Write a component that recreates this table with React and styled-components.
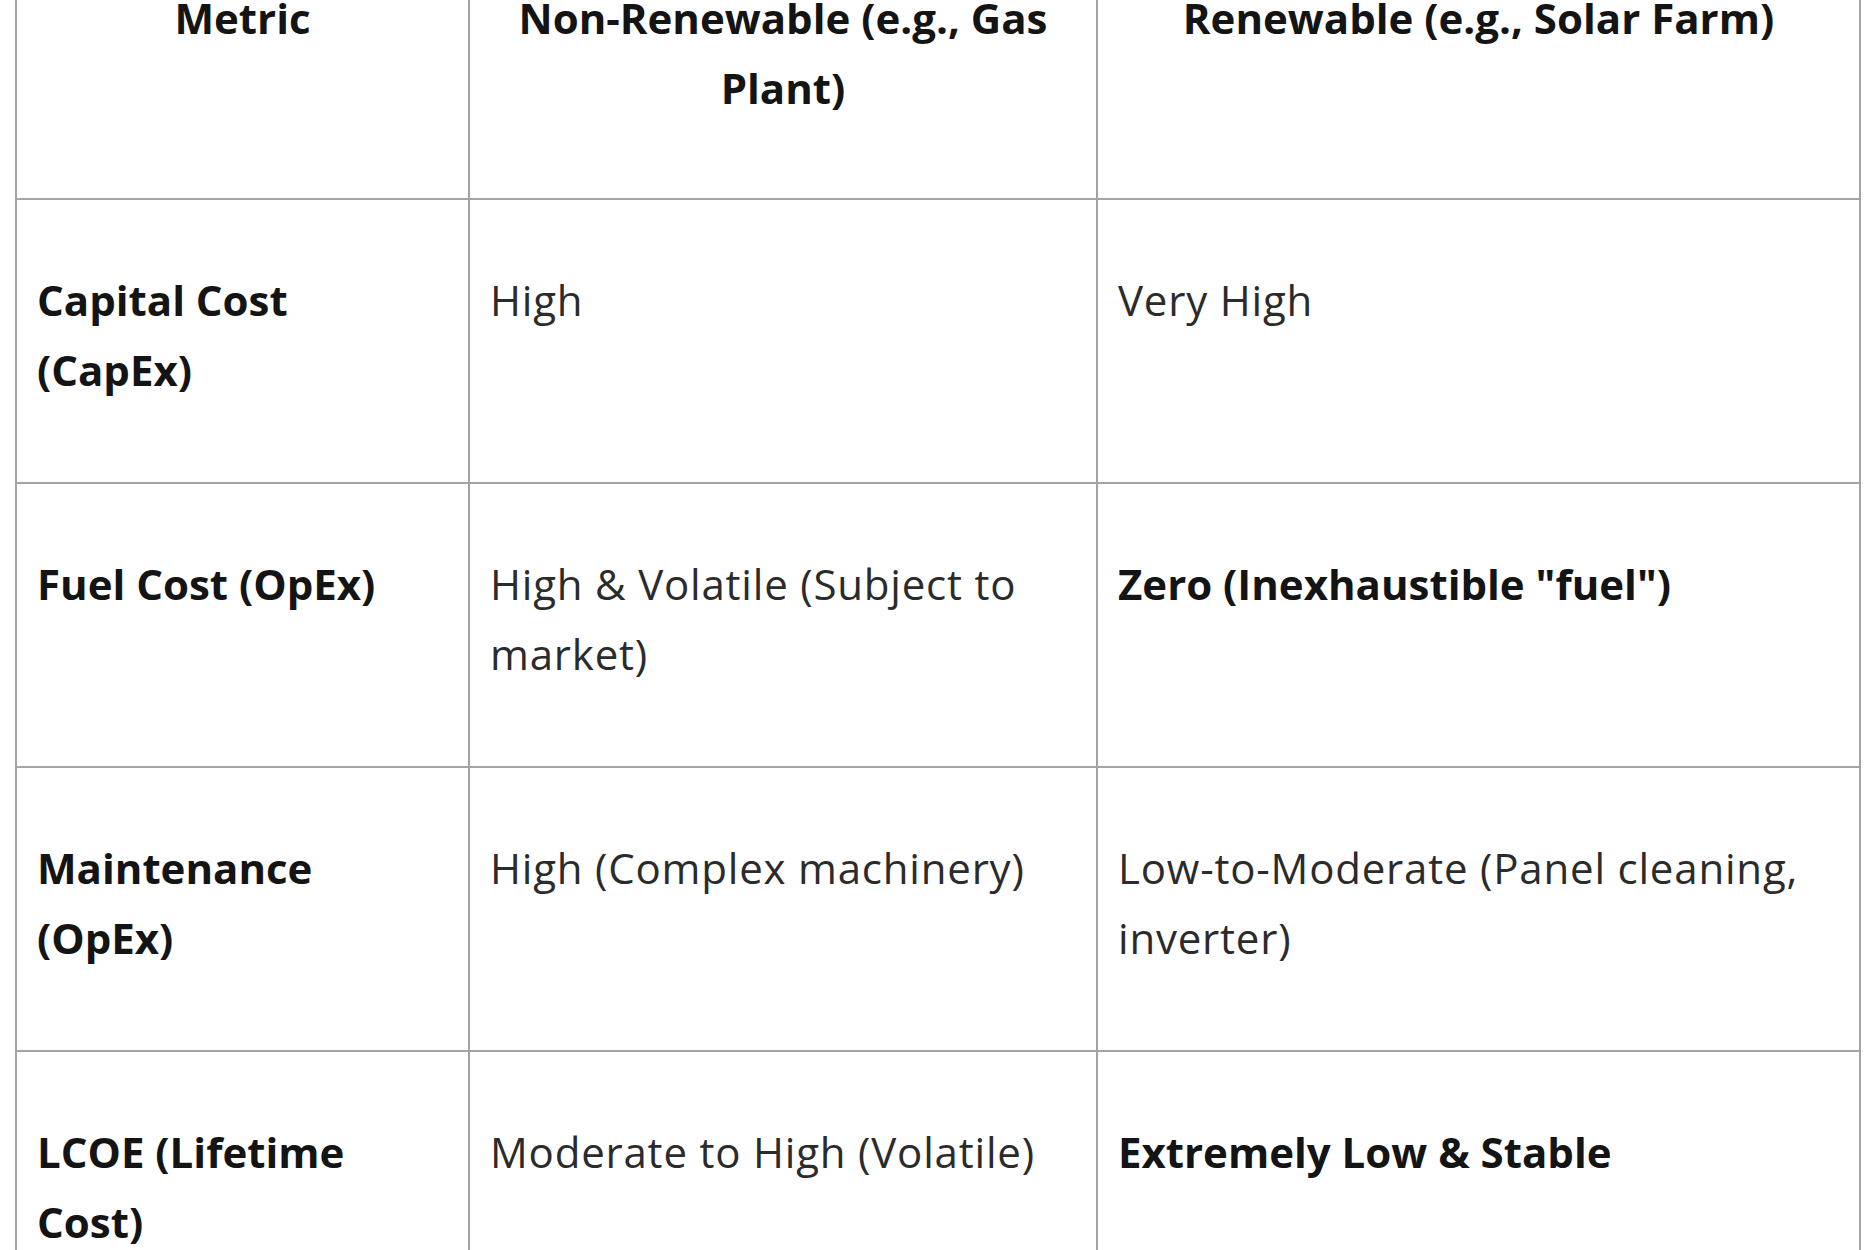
import React from "react";
import styled, { createGlobalStyle } from "styled-components";

const Global = createGlobalStyle`
  html, body {
    margin: 0;
    padding: 0;
    background: #ffffff;
    overflow: hidden;
  }
  body {
    font-family: "Open Sans", "Lato", "Noto Sans", sans-serif;
  }
`;

const Page = styled.div`
  padding: 0 0 0 15px;
  margin-top: -86px;
`;

const Table = styled.table`
  border-collapse: collapse;
  width: 1844px;
  table-layout: fixed;
  color: #262626;
  font-size: 42px;
  line-height: 69.5px;
`;

const Col = styled.col`
  width: ${(p) => p.$w}px;
`;

const Row = styled.tr`
  height: 284px;
`;

const HeadCell = styled.th`
  border: 2px solid #a3a3a3;
  padding: 67px 20px 0;
  vertical-align: top;
  text-align: center;
  font-weight: 700;
  color: #141414;
`;

const Cell = styled.td`
  border: 2px solid #a3a3a3;
  padding: 65px 20px 0;
  vertical-align: top;
  text-align: left;
  font-weight: ${(p) => (p.$bold ? 700 : 400)};
  letter-spacing: ${(p) => (p.$bold ? "0" : "0.8px")};
  color: ${(p) => (p.$bold ? "#141414" : "#2b2b2b")};
`;

const rows = [
  { metric: "Capital Cost (CapEx)", non: "High", ren: "Very High" },
  {
    metric: "Fuel Cost (OpEx)",
    non: "High & Volatile (Subject to market)",
    ren: 'Zero (Inexhaustible "fuel")',
    renBold: true,
  },
  {
    metric: "Maintenance (OpEx)",
    non: "High (Complex machinery)",
    ren: "Low-to-Moderate (Panel cleaning, inverter)",
  },
  {
    metric: "LCOE (Lifetime Cost)",
    non: "Moderate to High (Volatile)",
    ren: "Extremely Low & Stable",
    renBold: true,
  },
];

export default function App() {
  return (
    <>
      <Global />
      <Page>
        <Table>
          <colgroup>
            <Col $w={453} />
            <Col $w={628} />
            <Col $w={763} />
          </colgroup>
          <thead>
            <Row>
              <HeadCell>Metric</HeadCell>
              <HeadCell>Non-Renewable (e.g., Gas Plant)</HeadCell>
              <HeadCell>Renewable (e.g., Solar Farm)</HeadCell>
            </Row>
          </thead>
          <tbody>
            {rows.map((r) => (
              <Row key={r.metric}>
                <Cell $bold>{r.metric}</Cell>
                <Cell>{r.non}</Cell>
                <Cell $bold={r.renBold}>{r.ren}</Cell>
              </Row>
            ))}
          </tbody>
        </Table>
      </Page>
    </>
  );
}
